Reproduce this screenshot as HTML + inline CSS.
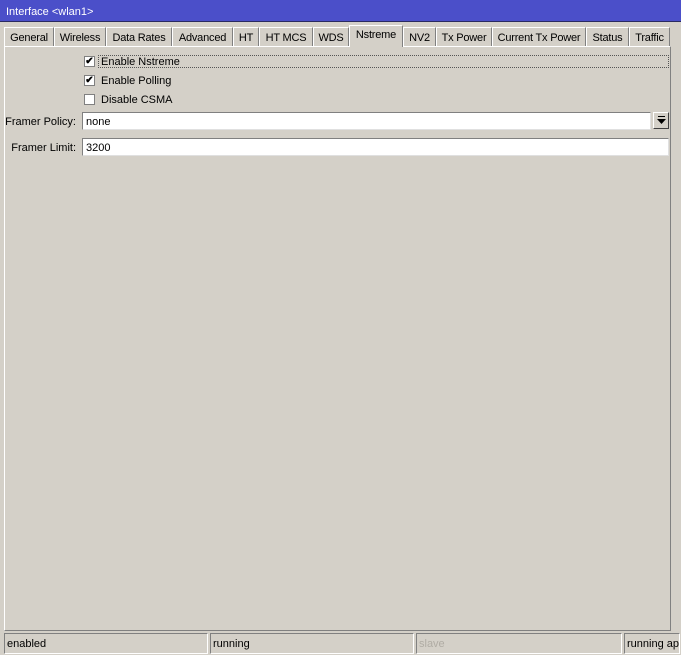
<!DOCTYPE html>
<html><head><style>
body{margin:0;width:681px;height:655px;background:#d4d0c8;font-family:"Liberation Sans",sans-serif;font-size:11px;color:#000;position:relative;overflow:hidden;white-space:nowrap}
.a{position:absolute}
#title{left:0;top:0;width:681px;height:22px;background:#4b4fc9;color:#fff;font-size:11px;line-height:24px;text-indent:6px;border-bottom:1px solid #2a2a60;box-sizing:border-box}
.tab{position:absolute;top:27px;height:19px;border:1px solid #fff;border-right-color:#808080;border-bottom:none;box-sizing:border-box;text-align:center;line-height:20px;font-size:11px;letter-spacing:-0.2px;background:#d4d0c8;overflow:hidden}
.sel{top:25px;height:22px;z-index:2;line-height:19px}
#panel{left:4px;top:46px;width:667px;height:585px;border:1px solid #fff;border-right-color:#808080;border-bottom-color:#808080;box-sizing:border-box}
.cb{position:absolute;left:84px;width:11px;height:11px;background:#fff;border:1px solid #808080;box-sizing:border-box;font-size:10px;line-height:9px;text-align:center;font-weight:bold}
.lbl{position:absolute;left:101px;font-size:11px}
.inp{position:absolute;left:82px;height:18px;background:#fff;border:1px solid #808080;border-right-color:#e0e0e0;border-bottom-color:#e0e0e0;box-sizing:border-box;font-size:11px;line-height:18px;padding-left:3px}
.fl{position:absolute;font-size:11px;text-align:right;width:76px;left:0}
.st{position:absolute;top:633px;height:21px;border:1px solid #808080;border-right-color:#fff;border-bottom-color:#fff;box-sizing:border-box;font-size:11px;line-height:21px;padding-left:2px;overflow:hidden}
</style></head><body>
<div id="title" class="a">Interface &lt;wlan1&gt;</div>
<div class="tab" style="left:4px;width:50px">General</div>
<div class="tab" style="left:54px;width:52px">Wireless</div>
<div class="tab" style="left:106px;width:66px">Data Rates</div>
<div class="tab" style="left:172px;width:61px">Advanced</div>
<div class="tab" style="left:233px;width:26px">HT</div>
<div class="tab" style="left:259px;width:54px">HT MCS</div>
<div class="tab" style="left:313px;width:36px">WDS</div>
<div class="tab sel" style="left:349px;width:54px">Nstreme</div>
<div class="tab" style="left:403px;width:33px">NV2</div>
<div class="tab" style="left:436px;width:56px">Tx Power</div>
<div class="tab" style="left:492px;width:94px">Current Tx Power</div>
<div class="tab" style="left:586px;width:43px">Status</div>
<div class="tab" style="left:629px;width:41px">Traffic</div>
<div id="panel" class="a"></div>
<div class="a" style="left:98px;top:55px;width:571px;height:13px;border:1px dotted #555;box-sizing:border-box"></div>
<div class="cb" style="top:56px">✔</div><div class="lbl" style="top:56px">Enable Nstreme</div>
<div class="cb" style="top:75px">✔</div><div class="lbl" style="top:75px">Enable Polling</div>
<div class="cb" style="top:94px"></div><div class="lbl" style="top:94px">Disable CSMA</div>
<div class="fl" style="top:116px">Framer Policy:</div>
<div class="inp" style="top:112px;width:569px">none</div>
<div class="a" style="left:653px;top:112px;width:16px;height:17px;border:1px solid #fff;border-right-color:#404040;border-bottom-color:#404040;box-sizing:border-box"><svg width="14" height="15" style="position:absolute;left:0;top:0"><rect x="4" y="3" width="7" height="1" fill="#000"/><path d="M3 6h9l-4.5 5z" fill="#000"/></svg></div>
<div class="fl" style="top:142px">Framer Limit:</div>
<div class="inp" style="top:138px;width:587px">3200</div>
<div class="st" style="left:4px;width:204px">enabled</div>
<div class="st" style="left:210px;width:204px">running</div>
<div class="st" style="left:416px;width:206px;color:#b0aca4">slave</div>
<div class="st" style="left:624px;width:56px">running ap</div>
</body></html>
